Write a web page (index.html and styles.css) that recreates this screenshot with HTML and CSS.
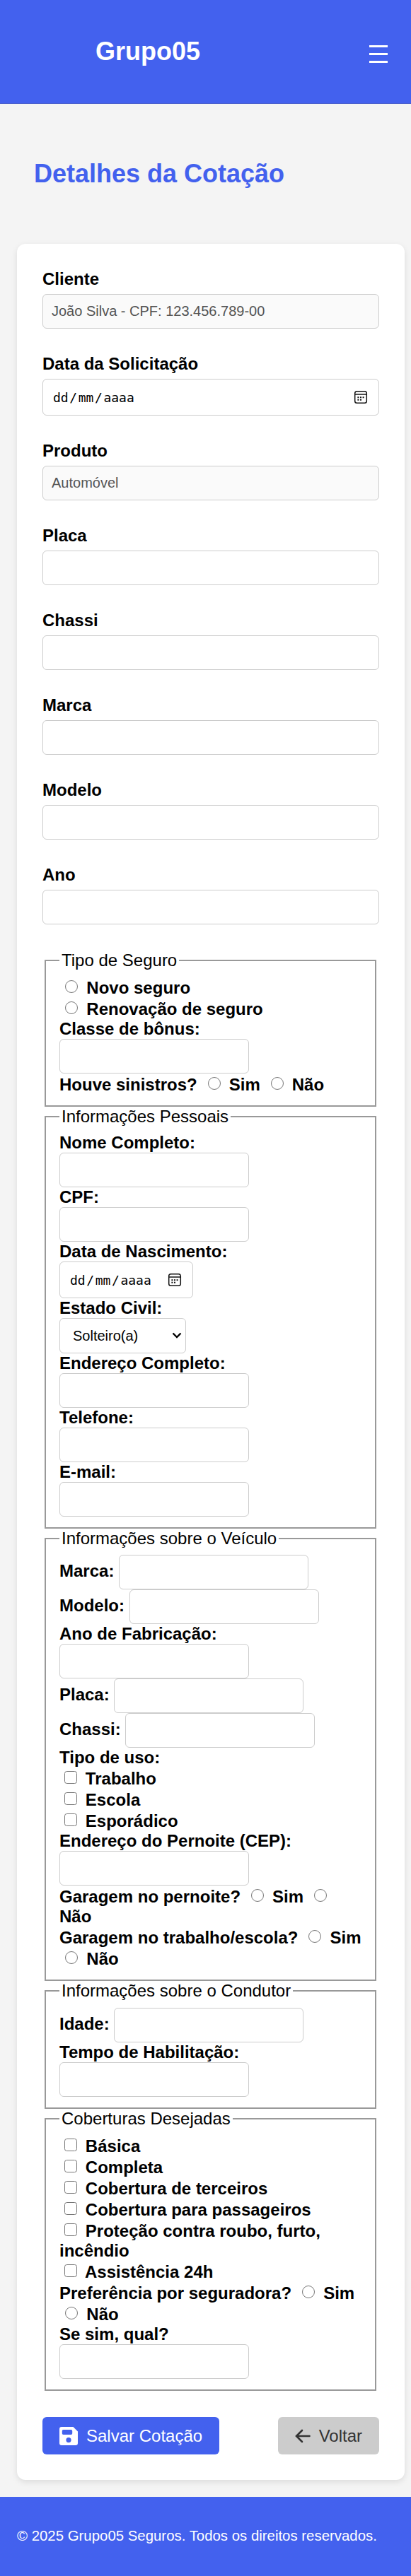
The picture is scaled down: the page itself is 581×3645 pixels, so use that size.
FILE: index.html
```html
<!DOCTYPE html>
<html lang="pt-BR">
<head>
<meta charset="utf-8">
<title>Detalhes da Cotação</title>
<link rel="stylesheet" href="styles.css">
</head>
<body>
<header class="header">
  <div class="logo">Grupo05</div>
  <button class="menu" aria-label="Menu"><span></span><span></span><span></span></button>
</header>
<h1 class="title">Detalhes da Cotação</h1>
<main class="card">
  <form class="form">
    <div class="group"><label>Cliente</label><input class="field" value="João Silva - CPF: 123.456.789-00" disabled></div>
    <div class="group"><label>Data da Solicitação</label>
      <div class="field date"><span class="date-text">dd<i>/</i>mm<i>/</i>aaaa</span><svg class="cal" viewBox="0 0 20 20"><rect x="1.7" y="1.7" width="16.6" height="16.6" rx="2.8"/><path d="M1.7 6h16.6"/><path class="dots" d="M9 9.300h2v2h-2zM12.600 9.300h2v2h-2zM5.400 9.300h2v2h-2zM5.400 12.800h2v2h-2zM9 12.800h2v2h-2z"/></svg></div></div>
    <div class="group"><label>Produto</label><input class="field" value="Automóvel" disabled></div>
    <div class="group"><label>Placa</label><input class="field"></div>
    <div class="group"><label>Chassi</label><input class="field"></div>
    <div class="group"><label>Marca</label><input class="field"></div>
    <div class="group"><label>Modelo</label><input class="field"></div>
    <div class="group"><label>Ano</label><input class="field"></div>

    <fieldset class="first">
      <legend>Tipo de Seguro</legend>
      <div class="opt"><input type="radio" name="tipo"> Novo seguro</div>
      <div class="opt"><input type="radio" name="tipo"> Renovação de seguro</div>
      <div class="text">Classe de bônus:</div>
      <div class="entry"><input class="field"></div>
      <div class="opt">Houve sinistros? <input type="radio" name="sin"> Sim <input type="radio" name="sin"> Não</div>
    </fieldset>

    <fieldset>
      <legend>Informações Pessoais</legend>
      <div class="text">Nome Completo:</div>
      <div class="entry"><input class="field"></div>
      <div class="text">CPF:</div>
      <div class="entry"><input class="field"></div>
      <div class="text">Data de Nascimento:</div>
      <div class="field date"><span class="date-text">dd<i>/</i>mm<i>/</i>aaaa</span><svg class="cal" viewBox="0 0 20 20"><rect x="1.7" y="1.7" width="16.6" height="16.6" rx="2.8"/><path d="M1.7 6h16.6"/><path class="dots" d="M9 9.300h2v2h-2zM12.600 9.300h2v2h-2zM5.400 9.300h2v2h-2zM5.400 12.800h2v2h-2zM9 12.800h2v2h-2z"/></svg></div>
      <div class="text">Estado Civil:</div>
      <div class="field select"><span>Solteiro(a)</span><svg class="chevron" viewBox="0 0 14 10"><path d="M1.5 1.5 7 7l5.5-5.5"/></svg></div>
      <div class="text">Endereço Completo:</div>
      <div class="entry"><input class="field"></div>
      <div class="text">Telefone:</div>
      <div class="entry"><input class="field"></div>
      <div class="text">E-mail:</div>
      <div class="entry"><input class="field"></div>
    </fieldset>

    <fieldset>
      <legend>Informações sobre o Veículo</legend>
      <div class="entry">Marca: <input class="field"></div>
      <div class="entry">Modelo: <input class="field"></div>
      <div class="text">Ano de Fabricação:</div>
      <div class="entry"><input class="field"></div>
      <div class="entry">Placa: <input class="field"></div>
      <div class="entry">Chassi: <input class="field"></div>
      <div class="text">Tipo de uso:</div>
      <div class="opt"><input type="checkbox"> Trabalho</div>
      <div class="opt"><input type="checkbox"> Escola</div>
      <div class="opt"><input type="checkbox"> Esporádico</div>
      <div class="text">Endereço do Pernoite (CEP):</div>
      <div class="entry"><input class="field"></div>
      <div class="opt wrap-text">Garagem no pernoite? <input type="radio" name="gp"> Sim <input type="radio" name="gp"> Não</div>
      <div class="opt wrap-opt">Garagem no trabalho/escola? <input type="radio" name="gt"> Sim <input type="radio" name="gt"> Não</div>
    </fieldset>

    <fieldset class="driver">
      <legend>Informações sobre o Condutor</legend>
      <div class="entry">Idade: <input class="field"></div>
      <div class="text">Tempo de Habilitação:</div>
      <div class="entry"><input class="field"></div>
    </fieldset>

    <fieldset>
      <legend>Coberturas Desejadas</legend>
      <div class="opt"><input type="checkbox"> Básica</div>
      <div class="opt"><input type="checkbox"> Completa</div>
      <div class="opt"><input type="checkbox"> Cobertura de terceiros</div>
      <div class="opt"><input type="checkbox"> Cobertura para passageiros</div>
      <div class="opt wrap-text"><input type="checkbox"> Proteção contra roubo, furto, incêndio</div>
      <div class="opt"><input type="checkbox"> Assistência 24h</div>
      <div class="opt wrap-opt">Preferência por seguradora? <input type="radio" name="ps"> Sim <input type="radio" name="ps"> Não</div>
      <div class="text">Se sim, qual?</div>
      <div class="entry"><input class="field"></div>
    </fieldset>

    <div class="actions">
      <button type="button" class="btn save"><svg viewBox="0 0 26 26"><path fill-rule="evenodd" d="M3 0h16.500L26 6.500V23a3 3 0 0 1-3 3H3a3 3 0 0 1-3-3V3a3 3 0 0 1 3-3zM5.500 4A1.700 1.700 0 0 0 3.800 5.700v3.600A1.700 1.700 0 0 0 5.500 11h11a1.700 1.700 0 0 0 1.700-1.700V5.700A1.700 1.700 0 0 0 16.500 4zM13 15a3.600 3.600 0 1 0 0 7.200 3.600 3.600 0 0 0 0-7.200z"/></svg>Salvar Cotação</button>
      <button type="button" class="btn back"><svg viewBox="0 0 22 20"><path d="M10 2 2 10l8 8M2.500 10H20.500"/></svg>Voltar</button>
    </div>
  </form>
</main>
<footer class="footer">© 2025 Grupo05 Seguros. Todos os direitos reservados.</footer>
</body>
</html>
```
FILE: styles.css
```css
* { box-sizing: border-box; }
body {
  margin: 0;
  background: #f4f4f4;
  color: #000;
  font: 24px/28px "Liberation Sans", Arial, sans-serif;
}
.header {
  display: flex;
  justify-content: space-between;
  align-items: center;
  height: 147px;
  padding: 0 33px 0 135px;
  background: #4361ee;
  border-bottom: 1px solid #4a60cc;
  color: #fff;
}
.logo { font-size: 36px; font-weight: bold; line-height: 42px; }
.menu {
  display: flex;
  flex-direction: column;
  gap: 8px;
  padding: 6px 0 0;
  border: 0;
  background: none;
}
.menu span { width: 26px; height: 3px; background: #fff; }
.title {
  margin: 78px 0 0 48px;
  color: #4361ee;
  font-size: 36px;
  line-height: 42px;
}
.card {
  margin: 78px 9px 24px 24px;
  padding: 36px;
  border-radius: 12px;
  background: #fff;
  box-shadow: 0 3px 9px rgba(0, 0, 0, .1);
}
.group { margin-bottom: 36px; }
.group label {
  display: block;
  height: 27px;
  margin-bottom: 8px;
  line-height: 27px;
  font-weight: bold;
}
.field {
  width: 268px;
  height: 49px;
  margin: 0;
  padding: 12px;
  border: 1px solid #ccc;
  border-radius: 6px;
  background: #fff;
  color: #000;
  font: 20px "Liberation Sans", Arial, sans-serif;
}
.group .field { display: block; width: 476px; }
.field:disabled { background: #fafafa; color: #545454; }
.group .date, fieldset .date {
  display: flex;
  align-items: center;
  justify-content: space-between;
  height: 52px;
  padding: 0 15px 0 14px;
}
fieldset .date { width: 189px; }
.date-text { font: 18px "DejaVu Sans Mono", monospace; }
.date-text i { margin: 0 1.600px; font-style: normal; }
.cal { width: 20px; height: 20px; fill: none; stroke: #111; stroke-width: 1.500; }
.cal .dots { fill: #111; stroke: none; }
.select {
  display: flex;
  align-items: center;
  justify-content: space-between;
  width: 179px;
  height: 50px;
  padding: 0 5px 0 18px;
}
.chevron { width: 14px; height: 10px; fill: none; stroke: #000; stroke-width: 2.400; }
fieldset {
  min-width: 0;
  margin: 0 4px 0 3px;
  padding: 9px 17px 15px 19px;
  border: 2px solid #999;
  font-weight: bold;
}
.first { margin-top: 37px; }
.driver { padding-top: 10px; }
legend { height: 28px; padding: 0 3px; font-weight: normal; }
.text { height: 28px; }
.entry { height: 49px; }
.opt { height: 30px; }
.wrap-text { height: 58px; }
.wrap-opt { height: 60px; }
input[type="radio"], input[type="checkbox"] {
  appearance: none;
  width: 18px;
  height: 18px;
  margin: 5px 5.500px 1px 8.200px;
  border: 1px solid #767676;
  border-radius: 50%;
  background: #fff;
  vertical-align: baseline;
}
input[type="checkbox"] { margin-left: 6.700px; border-radius: 3.500px; }
.actions {
  display: flex;
  justify-content: space-between;
  margin-top: 37px;
}
.btn {
  display: flex;
  align-items: center;
  gap: 12px;
  height: 53px;
  padding: 0 24px;
  border: 0;
  border-radius: 6px;
  font: 24px "Liberation Sans", Arial, sans-serif;
}
.save { background: #4361ee; color: #fff; }
.save svg { width: 26px; height: 26px; fill: #fff; }
.back { background: #ccc; color: #333; }
.back svg { width: 22px; height: 20px; fill: none; stroke: #333; stroke-width: 2.600; stroke-linecap: round; }
.footer {
  height: 112px;
  padding: 41px 24px;
  background: #4361ee;
  color: #fff;
  font-size: 20.400px;
  white-space: nowrap;
}
```
